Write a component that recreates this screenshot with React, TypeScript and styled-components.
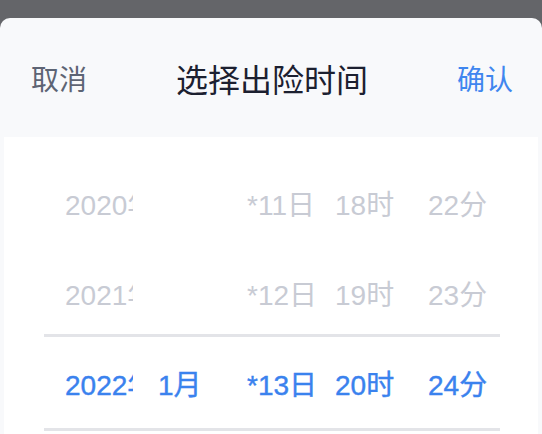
import React from 'react';
import styled, { createGlobalStyle } from 'styled-components';

const GlobalStyle = createGlobalStyle`
  html, body {
    margin: 0;
    padding: 0;
    background: #646569;
  }
  body {
    width: 542px;
    height: 434px;
    overflow: hidden;
    font-family: "Liberation Sans", "Noto Sans CJK SC", sans-serif;
  }
`;

const Sheet = styled.div`
  margin-top: 18px;
  height: 416px;
  background: #f8f9fb;
  border-radius: 10px 10px 0 0;
  display: flex;
  flex-direction: column;
  overflow: hidden;
`;

const Header = styled.div`
  height: 119px;
  flex-shrink: 0;
  display: flex;
  align-items: center;
  justify-content: space-between;
  padding: 0 29px 0 31px;
  font-family: "Noto Sans CJK SC", sans-serif;
`;

const HeaderAction = styled.button<{ $primary?: boolean }>`
  border: 0;
  background: none;
  padding: 0;
  font-family: inherit;
  font-size: 28px;
  line-height: 1;
  color: ${p => (p.$primary ? '#3f86ef' : '#5d6474')};
  cursor: pointer;
`;

const Title = styled.div`
  font-size: 32px;
  line-height: 1;
  color: #1c2030;
`;

const Body = styled.div`
  flex: 1;
  margin: 0 4px;
  background: #fff;
  position: relative;
  padding-top: 21px;
`;

const Indicator = styled.div`
  position: absolute;
  left: 40px;
  width: 456px;
  top: 197px;
  height: 91px;
  border-top: 3px solid #e3e4e8;
  border-bottom: 3px solid #e3e4e8;
  pointer-events: none;
`;

const Rows = styled.div`
  display: flex;
  flex-direction: column;
`;

const Row = styled.div<{ $active?: boolean }>`
  height: 90px;
  display: grid;
  grid-template-columns: 93px 89px 88px 93px auto;
  align-items: center;
  padding-left: 61px;
  font-size: 28px;
  color: ${p => (p.$active ? '#3a82ee' : '#c8cbd4')};
  -webkit-text-stroke: ${p => (p.$active ? '0.4px #3a82ee' : '0')};
`;

const Cell = styled.div<{ $clip?: number }>`
  white-space: nowrap;
  overflow: hidden;
  ${p => (p.$clip ? `max-width: ${p.$clip}px;` : '')}
`;

const rows = [
  { year: '2020年', month: '', day: '*11日', hour: '18时', minute: '22分' },
  { year: '2021年', month: '', day: '*12日', hour: '19时', minute: '23分' },
  { year: '2022年', month: '1月', day: '*13日', hour: '20时', minute: '24分', active: true },
];

export default function App() {
  return (
    <>
      <GlobalStyle />
      <Sheet>
        <Header>
          <HeaderAction>取消</HeaderAction>
          <Title>选择出险时间</Title>
          <HeaderAction $primary>确认</HeaderAction>
        </Header>
        <Body>
          <Rows>
            {rows.map((r, i) => (
              <Row key={i} $active={r.active}>
                <Cell $clip={68}>{r.year}</Cell>
                <Cell>{r.month}</Cell>
                <Cell>{r.day}</Cell>
                <Cell>{r.hour}</Cell>
                <Cell>{r.minute}</Cell>
              </Row>
            ))}
          </Rows>
          <Indicator />
        </Body>
      </Sheet>
    </>
  );
}
